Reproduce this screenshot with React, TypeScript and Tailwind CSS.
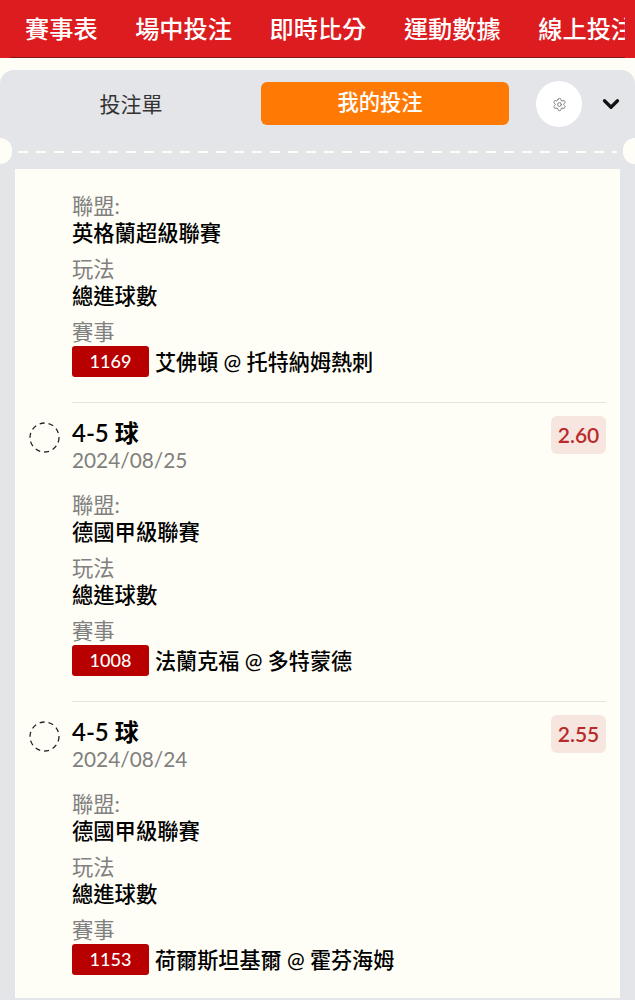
import { ChevronDown, Settings } from "lucide-react";

const NAV = ["賽事表", "場中投注", "即時比分", "運動數據", "線上投注"];

const BETS = [
  {
    league: "英格蘭超級聯賽",
    code: "1169",
    match: "艾佛頓 @ 托特納姆熱刺",
  },
  {
    title: "4-5 球",
    date: "2024/08/25",
    odds: "2.60",
    league: "德國甲級聯賽",
    code: "1008",
    match: "法蘭克福 @ 多特蒙德",
  },
  {
    title: "4-5 球",
    date: "2024/08/24",
    odds: "2.55",
    league: "德國甲級聯賽",
    code: "1153",
    match: "荷爾斯坦基爾 @ 霍芬海姆",
  },
];

function Field({ label, value }: { label: string; value: string }) {
  return (
    <div>
      <div className="text-[21.3px] leading-[27px] text-[#808080]">{label}</div>
      <div className="text-[21.3px] leading-[27px] font-medium text-black">{value}</div>
    </div>
  );
}

function BetItem({ bet, last }: { bet: (typeof BETS)[number]; last: boolean }) {
  return (
    <div className="pl-[57px] pr-[14px]">
      {/* title row, the first item is scrolled past it */}
      {bet.title && (
        <div className="relative pt-[13px] pb-[21px]">
          <svg className="absolute top-[19px] left-[-43px]" width="31" height="31" viewBox="0 0 31 31" fill="none">
            <circle cx="15.5" cy="15.5" r="14.5" stroke="#222222" strokeWidth="1.3" strokeDasharray="5 4" />
          </svg>
          <div className="absolute top-[13px] right-0 flex h-[38px] w-[55px] items-center justify-center rounded-md bg-[#f7e6df] text-[21px] font-semibold text-[#b92a2a]">
            {bet.odds}
          </div>
          <div className="text-[24px] leading-[33px] font-semibold text-black">{bet.title}</div>
          <div className="text-[20.8px] leading-[22px] text-[#808080]">{bet.date}</div>
        </div>
      )}
      <div className="flex flex-col gap-[9px]">
        <Field label="聯盟:" value={bet.league} />
        <Field label="玩法" value="總進球數" />
        <div>
          <div className="text-[21.3px] leading-[27px] text-[#808080]">賽事</div>
          <div className="flex items-center gap-[6px]">
            <span className="flex h-[31px] w-[77px] items-center justify-center rounded-[3px] bg-[#b80000] text-[18px] font-medium text-white">
              {bet.code}
            </span>
            <span className="text-[21.1px] leading-[31px] font-medium text-black">{bet.match}</span>
          </div>
        </div>
      </div>
      {!last && <div className="mt-[25px] h-[1px] bg-[#e4e3dc]" />}
    </div>
  );
}

export default function App() {
  return (
    <div className="h-[1000px] overflow-hidden bg-[#fffef6] font-['Lato','Noto_Sans_CJK_TC',sans-serif]">
      {/* Top nav */}
      <div className="h-[58px] bg-[#dc1c1f]">
        <div className="mx-[10px] flex h-[58px] gap-[37.6px] overflow-hidden border-b border-[#8a1414] pl-[15px]">
          {NAV.map((item) => (
            <span key={item} className="shrink-0 text-[24.2px] leading-[58px] font-medium whitespace-nowrap text-white">
              {item}
            </span>
          ))}
        </div>
      </div>

      {/* Bet slip panel */}
      <div className="relative mt-[12px] h-[930px] rounded-t-[14px] bg-[#e4e5e8]">
        <div className="flex items-center pt-[11px] pl-[2px]">
          <div className="w-[258px] text-center text-[21px] text-[#333333]">投注單</div>
          <div className="ml-[1px] mb-[2px] flex h-[43px] w-[248px] items-center justify-center rounded-md bg-[#ff7a05] pr-[10px] text-[21.3px] font-medium text-white">
            我的投注
          </div>
          <div className="ml-[27px] flex h-[46px] w-[46px] items-center justify-center rounded-full bg-white">
            <Settings size={15} strokeWidth={1.5} className="text-[#777777]" />
          </div>
          <ChevronDown size={26} strokeWidth={3} className="ml-[16px] text-[#111111]" />
        </div>

        {/* Ticket tear line */}
        <div className="absolute top-[68px] left-[-12px] h-[26px] w-[24px] rounded-full bg-[#fffef6]" />
        <div className="absolute top-[68px] right-[-12px] h-[26px] w-[24px] rounded-full bg-[#fffef6]" />
        <div className="mx-[18px] mt-[24px] h-[2px] bg-[repeating-linear-gradient(90deg,#fffef6_0_10px,transparent_10px_18px)]" />

        {/* Bets list */}
        <div className="mx-[15px] mt-[16px] h-[829px] overflow-hidden bg-[#fffef6] pt-[24px]">
          {BETS.map((bet, i) => (
            <BetItem key={bet.code} bet={bet} last={i === BETS.length - 1} />
          ))}
        </div>
      </div>
    </div>
  );
}
